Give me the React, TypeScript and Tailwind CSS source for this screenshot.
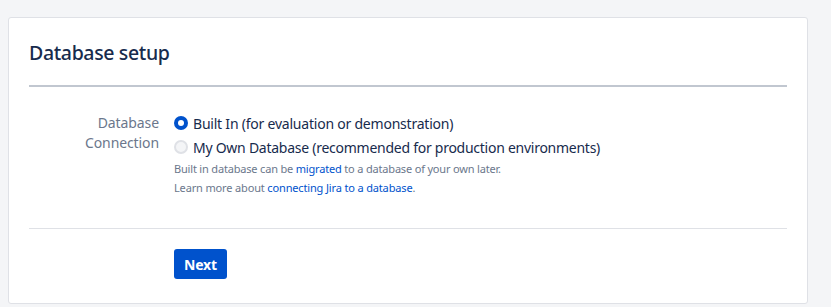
import React from "react";

export default function App() {
  return (
    <div className="w-[831px] h-[307px] bg-[#f4f5f7] pt-[17px] pl-[8px]" style={{ fontFamily: '"Noto Sans", "Open Sans", sans-serif' }}>
      <div className="w-[800px] h-[287px] bg-white border border-[#dfe1e6] rounded-[3px] px-[20px]">
        <h1 className="pt-[21px] h-[69px] text-[19.5px] leading-[27px] tracking-[-0.35px] font-medium text-[#172b4d] border-b-2 border-[#c1c7d0]">
          Database setup
        </h1>
        <div className="flex pt-[24px] h-[142px] border-b border-[#dfe1e6]">
          <div className="w-[130px] text-right text-[14px] leading-[20px] text-[#6b778c] pt-[2px] tracking-[-0.1px]">
            Database
            <br />
            Connection
          </div>
          <div className="ml-[15px] flex flex-col">
            <label className="flex items-center h-[24px] text-[14px] tracking-[-0.22px] text-[#172b4d]">
              <span className="w-[14px] h-[14px] rounded-full bg-[#0052cc] flex items-center justify-center mr-[5px]">
                <span className="w-[6px] h-[6px] rounded-full bg-white" />
              </span>
              Built In (for evaluation or demonstration)
            </label>
            <label className="flex items-center h-[24px] text-[14px] tracking-[-0.26px] text-[#172b4d]">
              <span className="w-[14px] h-[14px] rounded-full bg-[#f4f5f7] border-2 border-[#dfe1e6] mr-[5px]" />
              My Own Database (recommended for production environments)
            </label>
            <p className="text-[11px] leading-[19px] tracking-[-0.18px] text-[#6b778c]">
              Built in database can be <span className="text-[#0052cc]">migrated</span> to a database of your own later.
            </p>
            <p className="text-[11px] leading-[19px] tracking-[-0.15px] text-[#6b778c]">
              Learn more about <span className="text-[#0052cc]">connecting Jira to a database</span>.
            </p>
          </div>
        </div>
        <div className="pt-[20px] pl-[145px]">
          <button className="h-[30px] px-[10px] rounded-[3px] bg-[#0052cc] text-white text-[14px] font-bold tracking-[-0.2px]">
            Next
          </button>
        </div>
      </div>
    </div>
  );
}
